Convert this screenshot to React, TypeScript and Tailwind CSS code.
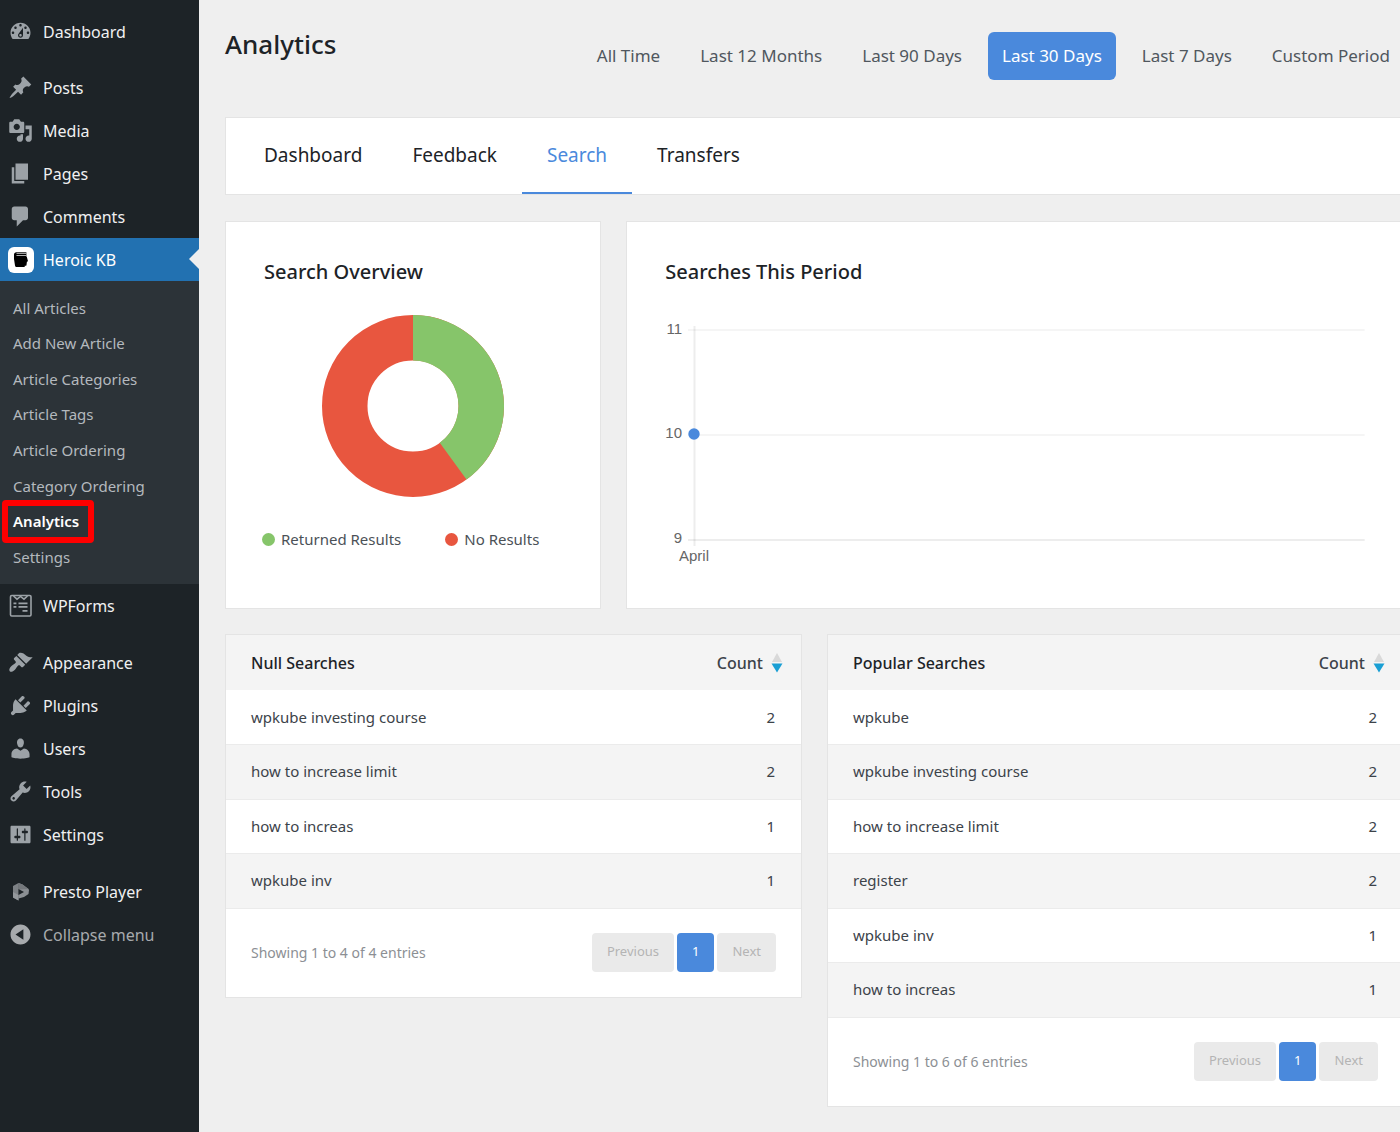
// src/App.tsx
import React from "react";

interface MenuItem {
  label: string;
  icon: React.ReactNode;
  active?: boolean;
}

interface SearchRow {
  term: string;
  count: number;
}

interface SearchTableProps {
  title: string;
  rows: SearchRow[];
}

const Dashicon: React.FC<{ d: string }> = ({ d }) => (
  <svg viewBox="0 0 20 20" className="size-[25px]" fill="currentColor" fillRule="evenodd">
    <path d={d} />
  </svg>
);

const HeroicIcon = () => (
  <span className="flex size-[26px] items-center justify-center rounded-md bg-white">
    <svg viewBox="0 0 26 26" className="size-[26px]">
      <path
        d="M8.400 5.200H18.400v4.600h.4l1.200 4.400-1.100.5-.4 3.200c-.1.600-.4.900-1 .9h-.8v1.300H9c-1.200 0-1.800-.5-2-1.500L6 12V7.600c0-1.500.9-2.400 2.400-2.400z"
        fill="#000"
      />
      <path d="M8.500 6.400h9.900M8.500 8.500h9.900" stroke="#c4c4c4" strokeWidth=".9" />
    </svg>
  </span>
);

const WPFormsIcon = () => (
  <svg viewBox="0 0 25 25" className="size-[25px]" fill="none" stroke="currentColor">
    <rect x="2.5" y="2.5" width="20.500" height="20.500" rx="1.200" strokeWidth="1.600" />
    <path d="M5.500 3l3.500 3.200L12.500 3.400 16 6.200 19.500 3" strokeWidth="1.600" />
    <path d="M10.500 10.300h9M10.500 13.900h9M14.500 17.800h5" strokeWidth="1.700" />
    <path d="M5.500 10.300h2.900M5.500 13.900h2.900" strokeWidth="1.700" />
  </svg>
);

const PrestoIcon = () => (
  <svg viewBox="0 0 25 25" className="size-[25px]">
    <path d="M5 7l5.500-3v17.500L5 18.500z" fill="#7d8185" />
    <path d="M10.500 4l4 1.500 6 4.500.5 1-.5 4-4.500 3-5.500 1.500z" fill="#8b8f93" />
    <path d="M10.500 4l4 1.500 6 4.500-10 .5z" fill="#74787c" />
    <path d="M10.500 10l5.500 2.900-5.500 3.100z" fill="#1d2327" />
    <path d="M5 13l5.500 3v5.500L5 18.500z" fill="#94989c" />
  </svg>
);

const icons = {
  dashboard:
    "M3.76 16h12.48c1.1-1.37 1.76-3.11 1.76-5 0-4.42-3.58-8-8-8s-8 3.58-8 8c0 1.89.66 3.63 1.76 5zM10 4c.55 0 1 .45 1 1s-.45 1-1 1-1-.45-1-1 .45-1 1-1zM6 6c.55 0 1 .45 1 1s-.45 1-1 1-1-.45-1-1 .45-1 1-1zm8 0c.55 0 1 .45 1 1s-.45 1-1 1-1-.45-1-1 .45-1 1-1zm-5.37 5.55L12 7v6c0 1.1-.9 2-2 2s-2-.9-2-2c0-.57.24-1.08.63-1.45zM4 10c.55 0 1 .45 1 1s-.45 1-1 1-1-.45-1-1 .45-1 1-1zm12 0c.55 0 1 .45 1 1s-.45 1-1 1-1-.45-1-1 .45-1 1-1zm-5 3c0-.55-.45-1-1-1s-1 .45-1 1 .45 1 1 1 1-.45 1-1z",
  posts:
    "M10.44 3.02l1.82-1.82 6.36 6.35-1.83 1.82c-1.05-.68-2.48-.57-3.41.36l-.75.75c-.92.93-1.04 2.35-.35 3.41l-1.83 1.82-2.41-2.41-2.8 2.79c-.42.42-3.38 2.71-3.8 2.29s1.86-3.39 2.28-3.81l2.79-2.79L4.1 9.36l1.83-1.82c1.05.69 2.48.57 3.4-.36l.75-.75c.93-.92 1.05-2.35.36-3.41z",
  media:
    "M13 11V4c0-.55-.45-1-1-1h-1.67L9 1H5L3.67 3H2c-.55 0-1 .45-1 1v7c0 .55.45 1 1 1h10c.55 0 1-.45 1-1zM7 4.5c1.38 0 2.5 1.12 2.5 2.5S8.38 9.5 7 9.5 4.5 8.38 4.5 7 5.62 4.5 7 4.5zM14 6h5v10.5c0 1.38-1.12 2.5-2.5 2.5S14 17.88 14 16.5s1.12-2.5 2.5-2.5c.17 0 .34.02.5.05V9h-3V6zm-4 8.05V13h2v3.5c0 1.38-1.12 2.5-2.5 2.5S7 17.88 7 16.5 8.12 14 9.5 14c.17 0 .34.02.5.05z",
  pages: "M6 15V2h10v13H6zm-1 1h8v2H3V5h2v11z",
  comments:
    "M5 2h9c1.1 0 2 .9 2 2v7c0 1.1-.9 2-2 2h-2l-5 5v-5H5c-1.1 0-2-.9-2-2V4c0-1.1.9-2 2-2z",
  appearance:
    "M14.48 11.06L7.41 3.99l1.5-1.5c.5-.56 2.3-.47 3.51.32 1.21.8 1.43 1.28 2.91 2.1 1.18.64 2.45 1.26 4.45.85zm-.71.71L6.7 4.7 4.93 6.47c-.39.39-.39 1.02 0 1.41l1.06 1.06c.39.39.39 1.03 0 1.42-.6.6-1.43 1.11-2.21 1.69-.35.26-.7.53-1.01.84C1.43 14.23.4 16.08 1.4 17.07c.99 1 2.84-.03 4.18-1.36.31-.31.58-.66.85-1.02.57-.78 1.08-1.61 1.69-2.21.39-.39 1.02-.39 1.41 0l1.06 1.06c.39.39 1.02.39 1.41 0z",
  plugins:
    "M13.11 4.36L9.87 7.6 8 5.73l3.24-3.24c.35-.34 1.05-.2 1.56.32.52.51.66 1.21.31 1.55zm-8 1.77l.91-1.12 9.01 9.01-1.19.84c-.71.71-2.63 1.16-3.82 1.16H6.14L4.9 17.26c-.59.59-1.54.59-2.12 0-.59-.58-.59-1.53 0-2.12l1.24-1.24v-3.88c0-1.13.4-3.19 1.09-3.89zm7.26 3.97l3.24-3.24c.34-.35 1.04-.21 1.55.31.52.51.66 1.21.31 1.55l-3.24 3.25z",
  users:
    "M10 9.25c-2.27 0-2.73-3.44-2.73-3.44C7 4.02 7.82 2 9.97 2c2.16 0 2.98 2.02 2.71 3.81 0 0-.41 3.44-2.68 3.44zm0 2.57L12.72 10c2.39 0 4.52 2.33 4.52 4.53v2.49s-3.65 1.13-7.24 1.13c-3.65 0-7.24-1.13-7.24-1.13v-2.49c0-2.25 1.94-4.48 4.47-4.48z",
  tools:
    "M16.68 9.77c-1.34 1.34-3.3 1.67-4.95.99l-5.41 6.52c-.99.99-2.59.99-3.58 0s-.99-2.59 0-3.57l6.52-5.42c-.68-1.65-.35-3.61.99-4.95 1.28-1.28 3.12-1.62 4.72-1.06l-2.89 2.89 2.82 2.82 2.86-2.87c.53 1.58.18 3.39-1.08 4.65zM3.81 16.21c.4.39 1.04.39 1.43 0 .4-.4.4-1.04 0-1.43-.39-.4-1.03-.4-1.43 0-.39.39-.39 1.03 0 1.43z",
  settings:
    "M18 16V4c0-.55-.45-1-1-1H3c-.55 0-1 .45-1 1v12c0 .55.45 1 1 1h14c.55 0 1-.45 1-1zM8 11h1c.55 0 1 .45 1 1s-.45 1-1 1H8v1.5c0 .28-.22.5-.5.5s-.5-.22-.5-.5V13H6c-.55 0-1-.45-1-1s.45-1 1-1h1V5.5c0-.28.22-.5.5-.5s.5.22.5.5V11zm5-2h-1c-.55 0-1-.45-1-1s.45-1 1-1h1V5.5c0-.28.22-.5.5-.5s.5.22.5.5V7h1c.55 0 1 .45 1 1s-.45 1-1 1h-1v5.5c0 .28-.22.5-.5.5s-.5-.22-.5-.5V9z",
  collapse:
    "M10 2c4.42 0 8 3.58 8 8s-3.58 8-8 8-8-3.58-8-8 3.58-8 8-8zM12.3 5.8L6 10l6.3 4.2z",
};

const menuContent: MenuItem[] = [
  { label: "Posts", icon: <Dashicon d={icons.posts} /> },
  { label: "Media", icon: <Dashicon d={icons.media} /> },
  { label: "Pages", icon: <Dashicon d={icons.pages} /> },
  { label: "Comments", icon: <Dashicon d={icons.comments} /> },
  { label: "Heroic KB", icon: <HeroicIcon />, active: true },
];

const submenu = [
  "All Articles",
  "Add New Article",
  "Article Categories",
  "Article Tags",
  "Article Ordering",
  "Category Ordering",
  "Analytics",
  "Settings",
];

const menuSite: MenuItem[] = [
  { label: "Appearance", icon: <Dashicon d={icons.appearance} /> },
  { label: "Plugins", icon: <Dashicon d={icons.plugins} /> },
  { label: "Users", icon: <Dashicon d={icons.users} /> },
  { label: "Tools", icon: <Dashicon d={icons.tools} /> },
  { label: "Settings", icon: <Dashicon d={icons.settings} /> },
];

const periods = [
  "All Time",
  "Last 12 Months",
  "Last 90 Days",
  "Last 30 Days",
  "Last 7 Days",
  "Custom Period",
];

const tabs = ["Dashboard", "Feedback", "Search", "Transfers"];

const nullSearches: SearchRow[] = [
  { term: "wpkube investing course", count: 2 },
  { term: "how to increase limit", count: 2 },
  { term: "how to increas", count: 1 },
  { term: "wpkube inv", count: 1 },
];

const popularSearches: SearchRow[] = [
  { term: "wpkube", count: 2 },
  { term: "wpkube investing course", count: 2 },
  { term: "how to increase limit", count: 2 },
  { term: "register", count: 2 },
  { term: "wpkube inv", count: 1 },
  { term: "how to increas", count: 1 },
];

const MenuLink: React.FC<{ item: MenuItem }> = ({ item }) => (
  <li className="relative">
    <a
      href="#"
      className={
        item.active
          ? "flex h-[43px] items-center gap-[9px] bg-[#2271b1] pl-2 text-white"
          : "flex h-[43px] items-center gap-[9px] pl-2 text-[#f0f0f1]"
      }
    >
      <span className="w-[26px] text-[#9ca2a7]">{item.icon}</span>
      {item.label}
    </a>
    {item.active && (
      <span className="absolute top-[11px] right-0 border-y-[10px] border-r-[10px] border-y-transparent border-r-[#efefef]" />
    )}
  </li>
);

const Sidebar = () => (
  <nav className="w-[199px] shrink-0 bg-[#1d2327] pt-[10px] text-[16px]">
    <ul>
      <MenuLink item={{ label: "Dashboard", icon: <Dashicon d={icons.dashboard} /> }} />
    </ul>
    <ul className="mt-[13px]">
      {menuContent.map((item) => (
        <MenuLink key={item.label} item={item} />
      ))}
    </ul>
    <ul className="flex h-[303px] flex-col bg-[#2c3338] py-[9px] text-[15px] text-[#b4b9be]">
      {submenu.map((label) => (
        <li key={label} className="relative flex flex-1 items-center pl-[13px]">
          {label === "Analytics" && (
            <span className="absolute -top-1 left-[2px] h-[43px] w-[92px] rounded-sm border-[6px] border-[#ff0000]" />
          )}
          <a href="#" className={label === "Analytics" ? "font-semibold text-white" : ""}>
            {label}
          </a>
        </li>
      ))}
    </ul>
    <ul>
      <MenuLink item={{ label: "WPForms", icon: <WPFormsIcon /> }} />
    </ul>
    <ul className="mt-[14px]">
      {menuSite.map((item) => (
        <MenuLink key={item.label} item={item} />
      ))}
    </ul>
    <ul className="mt-[14px]">
      <MenuLink item={{ label: "Presto Player", icon: <PrestoIcon /> }} />
    </ul>
    <button className="flex h-[43px] w-full items-center gap-[9px] pl-2 text-[#a7aaad]">
      <span className="w-[26px]">
        <Dashicon d={icons.collapse} />
      </span>
      Collapse menu
    </button>
  </nav>
);

const SearchOverview = () => (
  <section className="col-span-4 border border-[#e4e4e4] bg-white px-[38px] pt-[36px] pb-[57px]">
    <h2 className="text-[20px] leading-7 font-medium text-[#1d2327]">Search Overview</h2>
    <svg viewBox="0 0 182 182" className="mx-auto mt-[29px] size-[182px]">
      <circle cx="91" cy="91" r="68.25" fill="none" stroke="#e8563f" strokeWidth="45.5" />
      <path
        d="M91 0A91 91 0 0 1 144.49 164.62L117.74 127.81A45.5 45.5 0 0 0 91 45.5z"
        fill="#86c56a"
      />
    </svg>
    <ul className="mt-[30px] -ml-[2px] flex gap-[44px] text-[15px] leading-6 text-[#4b5157]">
      <li className="flex items-center gap-[6px]">
        <span className="size-[13px] rounded-full bg-[#86c56a]" />
        Returned Results
      </li>
      <li className="flex items-center gap-[6px]">
        <span className="size-[13px] rounded-full bg-[#e8563f]" />
        No Results
      </li>
    </ul>
  </section>
);

const SearchesChart = () => (
  <section className="col-span-8 border border-[#e4e4e4] bg-white px-[38px] pt-[36px]">
    <h2 className="text-[20px] leading-7 font-medium text-[#1d2327]">Searches This Period</h2>
    <svg className="mt-[29px] h-[260px] w-full font-['Liberation_Sans',sans-serif] text-[15px]">
      <g stroke="#000" strokeOpacity=".07" strokeWidth="2">
        <line x1="23" x2="100%" y1="15" y2="15" strokeOpacity=".04" />
        <line x1="23" x2="100%" y1="120" y2="120" strokeOpacity=".04" />
        <line x1="23" x2="100%" y1="225" y2="225" />
        <line x1="29.5" x2="29.5" y1="11" y2="231" />
      </g>
      <circle cx="29" cy="119" r="5.7" fill="#4a89dc" />
      <g fill="#666">
        <text x="17" y="19" textAnchor="end">11</text>
        <text x="17" y="123" textAnchor="end">10</text>
        <text x="17" y="228" textAnchor="end">9</text>
        <text x="29" y="246" textAnchor="middle">April</text>
      </g>
    </svg>
  </section>
);

const SearchTable: React.FC<SearchTableProps> = ({ title, rows }) => (
  <section className="col-span-6 self-start border border-[#e4e4e4] bg-white">
    <table className="w-full text-[15px] text-[#3c434a]">
      <thead>
        <tr className="h-[55px] bg-[#f4f4f4] text-[16px]">
          <th className="pl-[25px] text-left font-medium text-[#1d2327]">{title}</th>
          <th className="pr-[18px] font-medium">
            <button className="ml-auto flex items-center gap-2">
              Count
              <svg viewBox="0 0 12 20" className="h-5 w-3">
                <path d="M6 0l5 9H1z" fill="#d9d9d9" />
                <path d="M0.5 10.5h11L6 19.5z" fill="#1a9fd4" />
              </svg>
            </button>
          </th>
        </tr>
      </thead>
      <tbody>
        {rows.map((row) => (
          <tr
            key={row.term}
            className="odd:h-[54px] even:h-[55px] even:border-y even:border-[#ebebeb] even:bg-[#f4f4f4]"
          >
            <td className="pl-[25px]">{row.term}</td>
            <td className="pr-[26px] text-right">{row.count}</td>
          </tr>
        ))}
      </tbody>
    </table>
    <div className="flex items-center justify-between px-[25px] pt-6 pb-[25px]">
      <p className="text-[14px] text-[#8c8f94]">
        Showing 1 to {rows.length} of {rows.length} entries
      </p>
      <div className="flex gap-[3px] text-[13px]">
        <button disabled className="h-[39px] rounded-sm bg-[#eaeaea] px-[15px] text-[#b4b4b4]">
          Previous
        </button>
        <button className="h-[39px] rounded-sm bg-[#4a89dc] px-[15px] text-white">1</button>
        <button disabled className="h-[39px] rounded-sm bg-[#eaeaea] px-[15px] text-[#b4b4b4]">
          Next
        </button>
      </div>
    </div>
  </section>
);

const App = () => {
  return (
    <div className="flex min-h-screen bg-[#efefef] font-['Noto_Sans','Open_Sans',sans-serif] text-[#1d2327]">
      <Sidebar />
      <main className="min-w-0 flex-1 overflow-hidden pb-[25px] pl-[26px]">
        <div className="-mr-1">
          <header className="flex items-start justify-between pb-[37px]">
            <h1 className="pt-[26px] text-[26px] leading-9 font-medium">Analytics</h1>
            <div className="flex gap-3 pt-8 text-[17px] text-[#50575e]">
              {periods.map((period) => (
                <button
                  key={period}
                  className={
                    period === "Last 30 Days"
                      ? "h-12 rounded-md bg-[#4a89dc] px-[14px] text-white"
                      : "h-12 px-[14px]"
                  }
                >
                  {period}
                </button>
              ))}
            </div>
          </header>
          <nav className="flex h-[78px] border border-[#e4e4e4] bg-white px-[13px] text-[19px]">
            {tabs.map((tab) => (
              <a
                key={tab}
                href="#"
                className={
                  tab === "Search"
                    ? "flex items-center border-b-2 border-[#4a89dc] px-[25px] text-[#4a89dc]"
                    : "flex items-center border-b-2 border-transparent px-[25px]"
                }
              >
                {tab}
              </a>
            ))}
          </nav>
          <div className="mt-[26px] grid grid-cols-12 gap-[25px]">
            <SearchOverview />
            <SearchesChart />
            <SearchTable title="Null Searches" rows={nullSearches} />
            <SearchTable title="Popular Searches" rows={popularSearches} />
          </div>
        </div>
      </main>
    </div>
  );
};

export default App;
